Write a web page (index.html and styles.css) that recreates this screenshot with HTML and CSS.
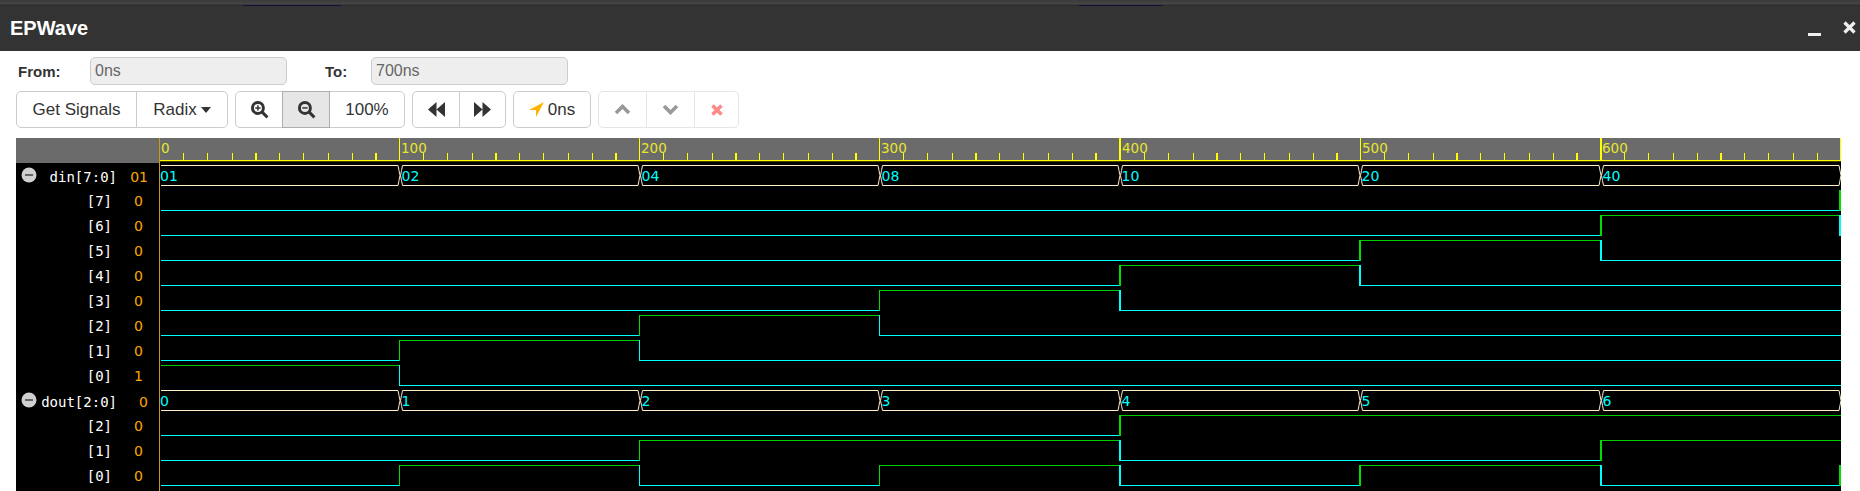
FILE: index.html
```html
<!DOCTYPE html>
<html>
<head>
    <title>EPWave</title>
    <link rel="stylesheet" href="styles.css">
</head>
<body>
    <div class="strip">
        <span class="strip-line first"></span>
        <span class="strip-line second"></span>
    </div>
    <div class="titlebar">
        <span class="title">EPWave</span>
        <span class="minimize"></span>
        <svg class="close" width="13" height="13" viewBox="0 0 13 13"><path d="M1.500 1.500l10 10M11.500 1.500l-10 10"/></svg>
    </div>

    <div class="range">
        <label class="from-label">From:</label>
        <div class="field">0ns</div>
        <label class="to-label">To:</label>
        <div class="field">700ns</div>
    </div>

    <div class="toolbar">
        <div class="group">
            <button class="btn w-signals">Get Signals</button>
            <button class="btn w-radix">Radix<span class="caret"></span></button>
        </div>
        <div class="group">
            <button class="btn w-icon">
                <svg class="icon" width="19" height="19" viewBox="0 0 18 18"><circle cx="7.500" cy="7.500" r="5.200"/><path d="M11.500 11.500l5 5"/><path class="thin" d="M5 7.500h5M7.500 5v5"/></svg>
            </button>
            <button class="btn w-icon active">
                <svg class="icon" width="19" height="19" viewBox="0 0 18 18"><circle cx="7.500" cy="7.500" r="5.200"/><path d="M11.500 11.500l5 5"/><path class="thin" d="M5 7.500h5"/></svg>
            </button>
            <button class="btn w-zoom">100%</button>
        </div>
        <div class="group">
            <button class="btn w-icon">
                <svg class="solid" width="17" height="15" viewBox="0 0 16 14"><path d="M8 0v14L0 7zM16 0v14L8 7z"/></svg>
            </button>
            <button class="btn w-back">
                <svg class="solid" width="17" height="15" viewBox="0 0 16 14"><path d="M0 0v14l8-7zM8 0v14l8-7z"/></svg>
            </button>
        </div>
        <div class="group">
            <button class="btn w-cursor">
                <svg class="arrow" width="15" height="15" viewBox="0 0 15 15"><path d="M15 0L0 8h7v7z"/></svg>0ns
            </button>
        </div>
        <div class="group disabled">
            <button class="btn w-up">
                <svg class="chevron" width="17" height="11" viewBox="0 0 17 11"><path d="M2 9l6.500-6.500L15 9"/></svg>
            </button>
            <button class="btn w-down">
                <svg class="chevron" width="17" height="11" viewBox="0 0 17 11"><path d="M2 2l6.500 6.500L15 2"/></svg>
            </button>
            <button class="btn w-remove">
                <svg class="cross" width="12" height="12" viewBox="0 0 12 12"><path d="M1.500 1.500l9 9M10.500 1.500l-9 9"/></svg>
            </button>
        </div>
    </div>

    <div class="wave-panel">
        <div class="names">
            <div class="names-head"></div>
            <div class="row bus">
                <svg class="toggle" width="16" height="16" viewBox="0 0 16 16"><circle cx="8" cy="8" r="7.500"/><rect x="4" y="7" width="8" height="2"/></svg>
                <span class="name">din[7:0]</span><span class="value">01</span>
            </div>
            <div class="row"><span class="name">[7]</span><span class="value">0</span></div>
            <div class="row"><span class="name">[6]</span><span class="value">0</span></div>
            <div class="row"><span class="name">[5]</span><span class="value">0</span></div>
            <div class="row"><span class="name">[4]</span><span class="value">0</span></div>
            <div class="row"><span class="name">[3]</span><span class="value">0</span></div>
            <div class="row"><span class="name">[2]</span><span class="value">0</span></div>
            <div class="row"><span class="name">[1]</span><span class="value">0</span></div>
            <div class="row"><span class="name">[0]</span><span class="value">1</span></div>
            <div class="row bus">
                <svg class="toggle" width="16" height="16" viewBox="0 0 16 16"><circle cx="8" cy="8" r="7.500"/><rect x="4" y="7" width="8" height="2"/></svg>
                <span class="name">dout[2:0]</span><span class="value">0</span>
            </div>
            <div class="row"><span class="name">[2]</span><span class="value">0</span></div>
            <div class="row"><span class="name">[1]</span><span class="value">0</span></div>
            <div class="row"><span class="name">[0]</span><span class="value">0</span></div>
        </div>

        <!-- viewBox uses page coordinates, so the numbers read off the screenshot directly -->
        <svg class="waves" width="1681" height="353" viewBox="160 138 1681 353">
            <!-- time ruler -->
            <rect class="ruler" x="160" y="138" width="1681" height="23"/>
            <g id="ticks">
                <path class="tick" d="M183.500 153v7M207.500 153v7M232.500 153v7M279.500 153v7M303.500 153v7M328.500 153v7M352.500 153v7"/>
                <path class="tick thick" d="M256 153v7M376 153v7"/>
            </g>
            <use href="#ticks" x="240"/>
            <use href="#ticks" x="480"/>
            <use href="#ticks" x="720"/>
            <use href="#ticks" x="961"/>
            <use href="#ticks" x="1201"/>
            <path class="tick" d="M1624.500 153v7M1648.500 153v7M1673.500 153v7M1697.500 153v7M1744.500 153v7M1768.500 153v7M1793.500 153v7M1817.500 153v7"/>
            <path class="tick thick" d="M1721 153v7"/>
            <path class="tick" d="M399.500 138v23M639.500 138v23M879.500 138v23M1360.500 138v23M1840.500 138v23"/>
            <path class="tick thick" d="M1120 138v23M1601 138v23"/>
            <path class="tick baseline" d="M160 160.600H1841"/>
            <text class="ruler-label" x="161" y="153">0</text>
            <text class="ruler-label" x="401" y="153">100</text>
            <text class="ruler-label" x="641" y="153">200</text>
            <text class="ruler-label" x="881" y="153">300</text>
            <text class="ruler-label" x="1122" y="153">400</text>
            <text class="ruler-label" x="1362" y="153">500</text>
            <text class="ruler-label" x="1602" y="153">600</text>

            <!-- bus outlines, din on top, dout is the same shape 225px lower -->
            <g id="bus">
                <path class="bus-line" d="M161 165.500H398l1 5 1 5-1 5-1 5H161"/>
                <path class="bus-line" d="M402.500 165.500H638l1 5 1 5-1 5-1 5H402.500l-1-5-1-5 1-5z"/>
                <path class="bus-line" d="M642.500 165.500H878l1 5 1 5-1 5-1 5H642.500l-1-5-1-5 1-5z"/>
                <path class="bus-line" d="M882.500 165.500H1118l1 5 1 5-1 5-1 5H882.500l-1-5-1-5 1-5z"/>
                <path class="bus-line" d="M1122.500 165.500H1358l1 5 1 5-1 5-1 5H1122.500l-1-5-1-5 1-5z"/>
                <path class="bus-line" d="M1362.500 165.500H1599l1 5 1 5-1 5-1 5H1362.500l-1-5-1-5 1-5z"/>
                <path class="bus-line" d="M1603.500 165.500H1839l1 5 1 5-1 5-1 5H1603.500l-1-5-1-5 1-5z"/>
            </g>
            <use href="#bus" y="225"/>
            <text class="bus-label" x="160" y="181">01</text>
            <text class="bus-label" x="401.500" y="181">02</text>
            <text class="bus-label" x="641.500" y="181">04</text>
            <text class="bus-label" x="881.500" y="181">08</text>
            <text class="bus-label" x="1121.500" y="181">10</text>
            <text class="bus-label" x="1361.500" y="181">20</text>
            <text class="bus-label" x="1602.500" y="181">40</text>
            <text class="bus-label" x="160" y="406">0</text>
            <text class="bus-label" x="401.500" y="406">1</text>
            <text class="bus-label" x="641.500" y="406">2</text>
            <text class="bus-label" x="881.500" y="406">3</text>
            <text class="bus-label" x="1121.500" y="406">4</text>
            <text class="bus-label" x="1361.500" y="406">5</text>
            <text class="bus-label" x="1602.500" y="406">6</text>

            <!-- low levels -->
            <path class="low" d="M161 210.500H1841
                M161 235.500H1601
                M161 260.500H1360M1601 260.500H1841
                M161 285.500H1120M1360 285.500H1841
                M161 310.500H880M1120 310.500H1841
                M161 335.500H640M880 335.500H1841
                M161 360.500H400M640 360.500H1841
                M400 385.500H1841
                M161 435.500H1120
                M161 460.500H640M1120 460.500H1601
                M161 485.500H400M640 485.500H880M1120 485.500H1360M1601 485.500H1841"/>
            <!-- high levels -->
            <path class="high" d="M1601 215.500H1841
                M1360 240.500H1601
                M1120 265.500H1360
                M880 290.500H1120
                M640 315.500H880
                M400 340.500H640
                M161 365.500H400
                M1120 415.500H1841
                M640 440.500H1120M1601 440.500H1841
                M400 465.500H640M880 465.500H1120M1360 465.500H1601"/>
            <!-- edges -->
            <path class="rise" d="M399.500 340v21M639.500 315v21M879.500 290v21M639.500 440v21M399.500 465v21M879.500 465v21"/>
            <path class="rise thick" d="M1840 190v21M1601 215v21M1360 240v21M1120 265v21M1120 415v21M1601 440v21M1360 465v21M1840 465v21"/>
            <path class="fall" d="M639.500 340v21M879.500 315v21M399.500 365v21M639.500 465v21"/>
            <path class="fall thick" d="M1840 215v21M1601 240v21M1360 265v21M1120 290v21M1120 440v21M1120 465v21M1601 465v21"/>
        </svg>
    </div>
</body>
</html>
```

FILE: styles.css
```css
* {
    box-sizing: border-box;
}

html, body {
    margin: 0;
    height: 491px;
    overflow: hidden;
    background-color: #fff;
    font-family: "Liberation Sans", Arial, sans-serif;
    color: #333;
}

/* Window chrome */
.strip {
    display: flex;
    height: 6px;
    background: linear-gradient(#3a3a3a, #454545 60%, #272727);
}

.strip-line {
    align-self: flex-end;
    height: 1px;
    background-color: #14103c;
}

.strip-line.first {
    margin-left: 243px;
    width: 98px;
}

.strip-line.second {
    margin-left: 738px;
    width: 84px;
}

.titlebar {
    display: flex;
    align-items: center;
    height: 45px;
    padding: 0 4px 0 10px;
    background-color: #333;
}

.title {
    flex: 1;
    font-size: 20px;
    font-weight: bold;
    color: #fff;
}

.minimize {
    width: 13px;
    height: 3px;
    margin: 11px 22px 0 0;
    background-color: #eee;
}

.close {
    margin-bottom: 2px;
}

.close path {
    fill: none;
    stroke: #eee;
    stroke-width: 3.2;
}

/* From / To row */
.range {
    display: flex;
    align-items: center;
    height: 28px;
    margin-top: 6px;
    padding-left: 18px;
}

.range label {
    font-size: 15px;
    font-weight: bold;
    color: #333;
}

.from-label {
    width: 72px;
}

.to-label {
    width: 46px;
    margin-left: 38px;
}

.field {
    width: 197px;
    height: 28px;
    padding-left: 4px;
    line-height: 26px;
    font-size: 16px;
    color: #666;
    background-color: #eee;
    border: 1px solid #ccc;
    border-radius: 5px;
}

/* Buttons */
.toolbar {
    display: flex;
    gap: 7px;
    height: 37px;
    margin-top: 6px;
    padding-left: 16px;
}

.group {
    display: flex;
}

.btn {
    display: flex;
    align-items: center;
    justify-content: center;
    height: 37px;
    margin-left: -1px;
    padding: 0;
    font-family: inherit;
    font-size: 17px;
    color: #333;
    background-color: #fff;
    border: 1px solid #ccc;
}

.btn:first-child {
    margin-left: 0;
    border-radius: 5px 0 0 5px;
}

.btn:last-child {
    border-radius: 0 5px 5px 0;
}

.btn:only-child {
    border-radius: 5px;
}

.btn.active {
    background-color: #e6e6e6;
    border-color: #adadad;
    position: relative;
}

.group.disabled .btn {
    border-color: #e6e6e6;
}

.w-signals { width: 121px; }
.w-radix { width: 92px; }
.w-icon { width: 48px; }
.w-back { width: 47px; }
.w-zoom { width: 76px; }
.w-cursor { width: 78px; }
.w-up { width: 49px; }
.w-down { width: 49px; }
.w-remove { width: 45px; }

.caret {
    width: 0;
    height: 0;
    margin-left: 4px;
    border-top: 6px solid #333;
    border-left: 5px solid transparent;
    border-right: 5px solid transparent;
}

.icon circle, .icon path {
    fill: none;
    stroke: #333;
    stroke-width: 2.8;
}

.icon .thin {
    stroke-width: 1.4;
}

.solid path {
    fill: #333;
}

.arrow {
    margin-right: 4px;
}

.arrow path {
    fill: #ffb300;
}

.chevron path {
    fill: none;
    stroke: #999;
    stroke-width: 3.6;
}

.cross path {
    fill: none;
    stroke: #f88;
    stroke-width: 3.6;
}

/* Wave panel */
.wave-panel {
    display: flex;
    width: 1825px;
    height: 353px;
    margin: 10px 0 0 16px;
    background-color: #000;
}

.names {
    width: 144px;
    border-right: 1px solid #c79a1e;
}

.names-head {
    height: 25px;
    background-color: #6b6b6b;
}

.row {
    display: flex;
    align-items: center;
    height: 25px;
    padding: 1px 0 0 21px;
    font-family: "DejaVu Sans Mono", monospace;
    font-size: 14px;
    color: #fff;
}

.bus {
    padding-top: 2px;
}

.toggle {
    position: absolute;
    left: 21px;
    margin-top: -3px;
}

.toggle circle {
    fill: #d0d0d0;
}

.toggle rect {
    fill: #666;
}

.name {
    width: 80px;
    padding-right: 5px;
    text-align: right;
}

.bus .name {
    padding-right: 0;
}

.value {
    padding-left: 17px;
    font-family: "DejaVu Sans", sans-serif;
    font-size: 14px;
    color: #ffa500;
}

.bus .value {
    width: 31px;
    padding-left: 0;
    text-align: right;
}

.waves {
    display: block;
    flex: none;
}

.ruler {
    fill: #6b6b6b;
}

.tick {
    fill: none;
    stroke: #ff0;
    stroke-width: 1;
}

.tick.thick {
    stroke-width: 2;
}

.tick.baseline {
    stroke-width: 1.200;
}

.ruler-label {
    font-family: "DejaVu Sans", sans-serif;
    font-size: 13.500px;
    fill: #e6e62e;
}

.bus-line {
    fill: none;
    stroke: #ffeec8;
    stroke-width: 1;
}

.bus-label {
    font-family: "DejaVu Sans", sans-serif;
    font-size: 14px;
    fill: #0ff;
}

.low, .high, .rise, .fall {
    fill: none;
    stroke-width: 1;
}

.low, .fall {
    stroke: #0ff;
}

.high {
    stroke: #0c0;
}

.rise {
    stroke: #0d0;
}

.rise.thick, .fall.thick {
    stroke-width: 2;
}
```
